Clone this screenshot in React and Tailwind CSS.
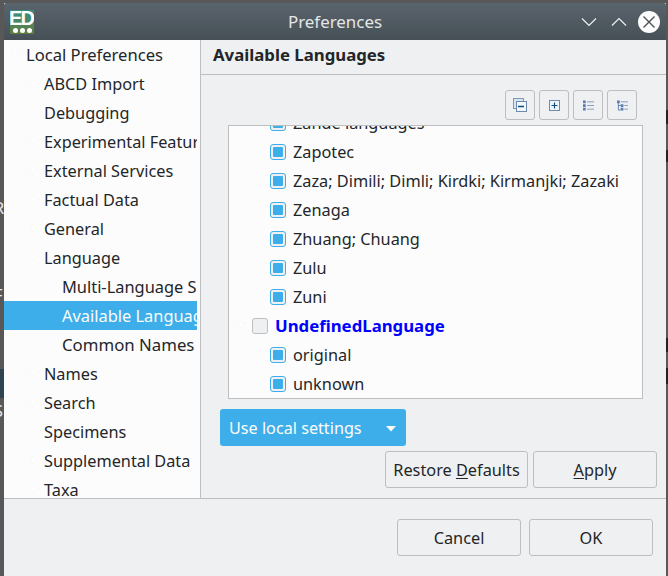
import React from "react";

const FONT = "font-['Noto_Sans',sans-serif]";

function Arrow({ down }) {
  return (
    <svg width="8" height="8" viewBox="0 0 8 8" className="shrink-0">
      {down ? <path d="M0 2h8L4 6.5z" fill="#ffffff" stroke="#f4f5f5" strokeWidth="0.5" /> : <path d="M2 0v8l4.5-4z" fill="#ffffff" stroke="#f4f5f5" strokeWidth="0.5" />}
    </svg>
  );
}

function TreeRow({ label, level = 1, arrow, selected }) {
  const pad =
    level === 0
      ? "pl-[22px] pt-[2px] text-[16.6px]"
      : level === 1
        ? "pl-[40px] pt-[2px]"
        : label === "Common Names"
          ? "pl-[58px] text-[16.8px]"
          : "pl-[58px] pt-[1px] text-[16.4px]";
  return (
    <div className={`relative h-[29px] flex items-center whitespace-nowrap ${pad} ${selected ? "bg-[#3daee9] text-[#fcfcfc]" : "text-[#232629]"}`}>
      {arrow && (
        <span className={`absolute top-[10px] ${level === 0 ? "left-[7px]" : "left-[26px]"}`}>
          <Arrow down={arrow === "down"} />
        </span>
      )}
      {label}
    </div>
  );
}

function Check({ checked }) {
  return checked ? (
    <span className="w-4 h-4 rounded-[3px] border border-[#3daee9] bg-[#eff0f1] p-[2px] shrink-0 block">
      <span className="block w-full h-full bg-[#3daee9] rounded-[1px]" />
    </span>
  ) : (
    <span className="w-4 h-4 rounded-[3px] border border-[#bcbebf] bg-[#eff0f1] shrink-0 block" />
  );
}

function LangRow({ label }) {
  return (
    <div className="h-[29px] shrink-0 flex items-center pl-[41px] gap-[7px] whitespace-nowrap text-[#232629]">
      <Check checked />
      <span className="pt-[2px]">{label}</span>
    </div>
  );
}

function ToolBtn({ children }) {
  return (
    <button className="w-[30px] h-[30px] rounded-[3px] border border-[#bcbebf] bg-[#eff0f1] flex items-center justify-center">
      {children}
    </button>
  );
}

function Btn({ children, w }) {
  return (
    <button className={`${w} h-[37px] pt-[1px] rounded-[3px] border border-[#bcbebf] bg-[#eff0f1] text-[#232629] text-[16.3px]`}>
      {children}
    </button>
  );
}

const tree = [
  ["Local Preferences", 0, "down"],
  ["ABCD Import", 1, "right"],
  ["Debugging", 1, "right"],
  ["Experimental Features", 1, "right"],
  ["External Services", 1, "right"],
  ["Factual Data", 1, "right"],
  ["General", 1, "right"],
  ["Language", 1, "down"],
  ["Multi-Language Support", 2],
  ["Available Languages", 2, null, true],
  ["Common Names", 2],
  ["Names", 1, "right"],
  ["Search", 1, "right"],
  ["Specimens", 1],
  ["Supplemental Data", 1, "right"],
  ["Taxa", 1, "right"],
  ["Zoology", 1, "right"],
];

export default function App() {
  return (
    <div className={`relative w-[668px] h-[576px] overflow-hidden bg-[#585858] pt-[3px] pl-[4px] pr-[2px] text-[16.3px] ${FONT}`}>
      {/* bits of the windows behind */}
      <div className="absolute left-0 top-[369px] w-[4px] h-[29px] bg-[#2f4450]" />
      <div className="absolute left-[-6px] top-[197px] w-[10px] overflow-hidden text-[#e8e8e8] leading-[22px]">R</div>
      <div className="absolute left-[-6px] top-[284px] w-[10px] overflow-hidden text-[#e8e8e8] leading-[22px]">F</div>
      <div className="absolute left-[-6px] top-[400px] w-[10px] overflow-hidden text-[#e8e8e8] leading-[22px]">S</div>
      <div className="absolute left-[666px] top-[110px] w-[2px] h-[14px] bg-[#222]" />
      <div className="absolute left-[666px] top-[150px] w-[2px] h-[12px] bg-[#222]" />
      <div className="absolute left-[666px] top-[338px] w-[2px] h-[14px] bg-[#222]" />
      <div className="absolute left-[666px] top-[368px] w-[2px] h-[16px] bg-[#222]" />

      <div className="relative h-[573px] w-[662px] flex flex-col bg-[#eff0f1]">
        {/* title bar */}
        <div className="h-[37px] shrink-0 flex items-center bg-gradient-to-b from-[#5a646c] to-[#475057] rounded-t-[2px] relative">
          <div className="ml-[6px] mb-[-1px] w-[24px] h-[24px] flex flex-col items-center bg-gradient-to-b from-[#2f8f86] to-[#5f7d3a] overflow-hidden">
            <span className="text-white font-bold text-[20px] leading-[17px] tracking-[-2px] pr-[2px] font-['Liberation_Sans',sans-serif]">ED</span>
            <span className="flex gap-[2px] mt-[1px]">
              <span className="w-[5px] h-[5px] rounded-full bg-white" />
              <span className="w-[5px] h-[5px] rounded-full bg-white" />
              <span className="w-[5px] h-[5px] rounded-full bg-white" />
            </span>
          </div>
          <div className="absolute left-0 right-0 text-center text-[#e4e6e8] text-[16.9px]">Preferences</div>
          <div className="ml-auto flex items-center mr-[6px]">
            <svg width="16" height="10" viewBox="0 0 16 10" className="mr-[14px]" fill="none" stroke="#eff0f1" strokeWidth="1.2">
              <path d="M1 1.5 8 8.5l7-7" />
            </svg>
            <svg width="16" height="10" viewBox="0 0 16 10" className="mr-[11px]" fill="none" stroke="#eff0f1" strokeWidth="1.2">
              <path d="M1 8.5 8 1.5l7 7" />
            </svg>
            <svg width="22" height="22" viewBox="0 0 22 22">
              <circle cx="11" cy="11" r="11" fill="#fcfcfc" />
              <path d="M5.5 5.5l11 11M16.5 5.5l-11 11" stroke="#4a5259" strokeWidth="1.4" />
            </svg>
          </div>
        </div>

        {/* body */}
        <div className="h-[459px] shrink-0 flex border-b border-[#bcbebf]">
          <div className="w-[197px] shrink-0 bg-[#fcfcfc] border-r border-[#bcbebf] pr-[3px]">
            <div className="h-full overflow-hidden">
              {tree.map(([label, level, arrow, selected]) => (
                <TreeRow key={label} label={label} level={level} arrow={arrow} selected={selected} />
              ))}
            </div>
          </div>

          <div className="flex-1 min-w-0 flex flex-col">
            <div className="h-[35px] shrink-0 border-b border-[#bcbebf] pl-[12px] pb-[4px] flex items-center font-bold text-[16.8px] text-[#232629]">
              Available Languages
            </div>
            <div className="flex justify-end gap-[4px] pr-[29px] mt-[15px]">
              <ToolBtn>
                <svg width="14" height="14" viewBox="0 0 14 14" fill="none">
                  <rect x="0.5" y="0.5" width="10" height="10" fill="#d6e6f2" stroke="#7f9ab5" />
                  <rect x="3.5" y="3.5" width="10" height="10" fill="#f2f7fb" stroke="#6f8aa8" />
                  <path d="M5 8.5h6" stroke="#0f4f80" strokeWidth="1.5" />
                </svg>
              </ToolBtn>
              <ToolBtn>
                <svg width="11" height="11" viewBox="0 0 11 11" fill="none">
                  <rect x="0.5" y="0.5" width="10" height="10" fill="#eef4f9" stroke="#6f8aa8" />
                  <path d="M2.5 5.5h6M5.5 2.5v6" stroke="#0f4f80" strokeWidth="1.2" />
                </svg>
              </ToolBtn>
              <ToolBtn>
                <svg width="11" height="11" viewBox="0 0 12 11" fill="none">
                  <path d="M0 0h3v3H0zM0 4h3v3H0zM0 8h3v3H0z" fill="#5d7fb0" />
                  <path d="M4.5 1.5H12M4.5 5.5H12M4.5 9.5H12" stroke="#7f97bd" />
                </svg>
              </ToolBtn>
              <ToolBtn>
                <svg width="11" height="11" viewBox="0 0 12 11" fill="none">
                  <path d="M1.5 2v8.5H4M1.5 5.5H4" stroke="#5d7fb0" />
                  <path d="M0 0h3v3H0zM4 4h3v3H4zM4 8h3v3H4z" fill="#5d7fb0" />
                  <path d="M4 1.5h8M8 5.5h4M8 9.5h4" stroke="#7f97bd" />
                </svg>
              </ToolBtn>
            </div>

            <div className="ml-[27px] mt-[5px] w-[415px] h-[274px] shrink-0 border border-[#bcbebf] bg-[#fcfcfc] overflow-hidden flex flex-col justify-end">
              <LangRow label="Zande languages" />
              <LangRow label="Zapotec" />
              <LangRow label="Zaza; Dimili; Dimli; Kirdki; Kirmanjki; Zazaki" />
              <LangRow label="Zenaga" />
              <LangRow label="Zhuang; Chuang" />
              <LangRow label="Zulu" />
              <LangRow label="Zuni" />
              <div className="relative h-[29px] shrink-0 flex items-center pl-[23px] gap-[7px] whitespace-nowrap">
                <span className="absolute left-[8px] top-[10px]"><Arrow down /></span>
                <Check />
                <span className="font-bold text-[16.8px] text-[#0000ff]">UndefinedLanguage</span>
              </div>
              <LangRow label="original" />
              <LangRow label="unknown" />
            </div>

            <div className="ml-[19px] mt-[10px] w-[186px] h-[37px] pt-[2px] shrink-0 rounded-[3px] bg-[#3daee9] text-[#fcfcfc] text-[16.2px] flex items-center pl-[9px]">
              Use local settings
              <svg width="10" height="6" viewBox="0 0 10 6" className="ml-auto mr-[10px]">
                <path d="M0 0h10L5 5.5z" fill="#fcfcfc" />
              </svg>
            </div>

            <div className="flex justify-end gap-[5px] pr-[9px] mt-[5px]">
              <Btn w="w-[143px]">Restore <span className="underline underline-offset-2">D</span>efaults</Btn>
              <Btn w="w-[124px]"><span className="underline underline-offset-2">A</span>pply</Btn>
            </div>
          </div>
        </div>

        {/* footer */}
        <div className="flex justify-end gap-[8px] pr-[13px] pt-[20px]">
          <Btn w="w-[124px]">Cancel</Btn>
          <Btn w="w-[124px]">OK</Btn>
        </div>
      </div>
    </div>
  );
}
